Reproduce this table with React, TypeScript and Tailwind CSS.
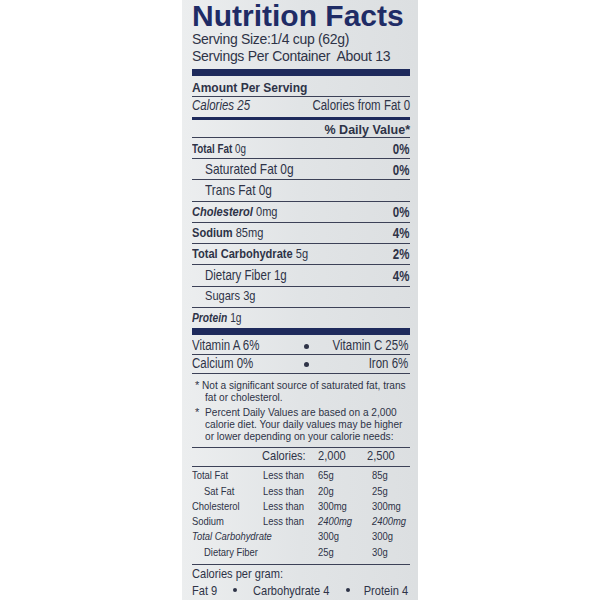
import React from "react";

const sans = "font-['Liberation_Sans',Arial,sans-serif]";

// the label uses a condensed face; squeeze Liberation Sans to match
function C({
  children,
  right,
  className = "",
  squeeze = "scale-x-[0.82]",
}: {
  children: React.ReactNode;
  right?: boolean;
  className?: string;
  squeeze?: string;
}) {
  return (
    <span
      className={`inline-block whitespace-nowrap ${squeeze} ${right ? "origin-right" : "origin-left"} ${className}`}
    >
      {children}
    </span>
  );
}

interface Nutrient {
  label: string;
  amount: string;
  pct?: string;
  bold?: boolean;
  italic?: boolean;
  indent?: boolean;
  size: string;
  h: string;
  pb: string;
}

const nutrients: Nutrient[] = [
  { label: "Total Fat", amount: "0g", pct: "0%", bold: true, size: "text-[12px]", h: "h-[21px]", pb: "pb-[2px]" },
  { label: "Saturated Fat", amount: "0g", pct: "0%", indent: true, size: "text-[14.5px]", h: "h-[21px]", pb: "pb-[2px]" },
  { label: "Trans Fat", amount: "0g", indent: true, size: "text-[14.5px]", h: "h-[22px]", pb: "pb-[3px]" },
  { label: "Cholesterol", amount: "0mg", pct: "0%", bold: true, italic: true, size: "text-[13.5px]", h: "h-[21px]", pb: "pb-[3px]" },
  { label: "Sodium", amount: "85mg", pct: "4%", bold: true, size: "text-[13.5px]", h: "h-[21px]", pb: "pb-[3px]" },
  { label: "Total Carbohydrate", amount: "5g", pct: "2%", bold: true, size: "text-[13.5px]", h: "h-[21px]", pb: "pb-[3px]" },
  { label: "Dietary Fiber", amount: "1g", pct: "4%", indent: true, size: "text-[14px]", h: "h-[22px]", pb: "pb-[3px]" },
  { label: "Sugars", amount: "3g", indent: true, size: "text-[13.5px]", h: "h-[21px]", pb: "pb-[4px]" },
];

const dvRows = [
  { label: "Total Fat", less: "Less than", a: "65g", b: "85g" },
  { label: "Sat Fat", less: "Less than", a: "20g", b: "25g", indent: true },
  { label: "Cholesterol", less: "Less than", a: "300mg", b: "300mg" },
  { label: "Sodium", less: "Less than", a: "2400mg", b: "2400mg", italicNums: true },
  { label: "Total Carbohydrate", less: "", a: "300g", b: "300g", italic: true },
  { label: "Dietary Fiber", less: "", a: "25g", b: "30g", indent: true },
];

function Dot({ size = "w-[5px] h-[5px]" }: { size?: string }) {
  return <span className={`${size} rounded-full bg-[#2e3347] inline-block shrink-0`} />;
}

export default function App() {
  return (
    <div className="w-[600px] h-[600px] bg-white flex justify-center overflow-hidden">
      <div className={`w-[236px] h-full bg-linear-to-r from-[#eceeef] via-[#e1e4e6] to-[#dcdfe1] pl-[10px] pr-[8px] flex flex-col text-[#2e3347] ${sans}`}>
        {/* Title */}
        <div className="h-[31px] pt-[1px] text-[30px] leading-[30px] font-black text-[#1f2c66] whitespace-nowrap">
          Nutrition Facts
        </div>
        <div className="text-[14px] leading-[17px] tracking-[-0.3px] whitespace-nowrap">
          <div>Serving Size:1/4 cup (62g)</div>
          <div>Servings Per Container&nbsp; About 13</div>
        </div>

        <div className="mt-[4px] h-[7px] bg-[#1e2a5c]" />

        {/* Amount per serving */}
        <div className="h-[21px] border-b border-[#3c4157] flex items-end pb-[2px] font-bold text-[12px] leading-none">
          Amount Per Serving
        </div>
        <div className="h-[20px] flex items-end justify-between pb-[5px] text-[14px] leading-none">
          <C className="italic">Calories 25</C>
          <C right>Calories from Fat 0</C>
        </div>
        <div className="h-[3px] bg-[#1e2a5c]" />

        <div className="h-[18px] border-b border-[#3c4157] flex items-end justify-end pb-[1px] font-bold text-[12.5px] leading-none">
          % Daily Value*
        </div>

        {nutrients.map((n) => (
          <div
            key={n.label}
            className={`${n.h} ${n.pb} border-b border-[#3c4157] flex items-end justify-between leading-none`}
          >
            <div className={n.indent ? "pl-[13px]" : ""}>
              <C className={n.size}>
                <span className={`${n.bold ? "font-bold" : ""} ${n.italic ? "italic" : ""}`}>{n.label}</span> {n.amount}
              </C>
            </div>
            {n.pct && (
              <C right className="text-[14px] font-bold pr-[1px]">
                {n.pct}
              </C>
            )}
          </div>
        ))}

        <div className="h-[20px] flex items-end pb-[4px] leading-none">
          <C className="text-[12.5px]">
            <span className="font-bold italic">Protein</span> 1g
          </C>
        </div>
        <div className="h-[7px] bg-[#1e2a5c]" />

        {/* Vitamins */}
        <div className="h-[20px] border-b border-[#3c4157] grid grid-cols-[110px_8px_1fr] items-end pb-[2px] text-[14px] leading-none">
          <C>Vitamin A 6%</C>
          <span className="flex justify-center pb-[3px]"><Dot /></span>
          <span className="text-right pr-[2px]"><C right>Vitamin C 25%</C></span>
        </div>
        <div className="h-[19px] border-b border-[#3c4157] grid grid-cols-[110px_8px_1fr] items-end pb-[3px] text-[14px] leading-none">
          <C>Calcium 0%</C>
          <span className="flex justify-center pb-[3px]"><Dot /></span>
          <span className="text-right pr-[2px]"><C right>Iron 6%</C></span>
        </div>

        {/* Footnotes */}
        <div className="border-b border-[#3c4157] pt-[5px] pb-[5px] text-[11px] leading-[12.3px]">
          <div className="flex">
            <span className="w-[10px] pl-[3px] shrink-0">*</span>
            <div>
              <div><C squeeze="scale-x-[0.92]">Not a significant source of saturated fat, trans</C></div>
              <div className="pl-[3px]"><C squeeze="scale-x-[0.92]">fat or cholesterol.</C></div>
            </div>
          </div>
          <div className="flex mt-[2px]">
            <span className="w-[13px] pl-[3px] shrink-0">*</span>
            <div>
              <div><C squeeze="scale-x-[0.92]">Percent Daily Values are based on a 2,000</C></div>
              <div><C squeeze="scale-x-[0.92]">calorie diet. Your daily values may be higher</C></div>
              <div><C squeeze="scale-x-[0.92]">or lower depending on your calorie needs:</C></div>
            </div>
          </div>
        </div>

        {/* DV table */}
        <div className="h-[19px] border-b border-[#3c4157] grid grid-cols-[70px_56px_49px_1fr] items-end pb-[4px] text-[13.5px] leading-none">
          <span />
          <C>Calories:</C>
          <C>2,000</C>
          <C>2,500</C>
        </div>
        <div className="border-b border-[#3c4157] pt-[1px] pb-[4px] text-[11.5px] leading-[15.2px]">
          {dvRows.map((r) => (
            <div key={r.label} className="grid grid-cols-[71px_55px_54px_1fr]">
              <div className={r.indent ? "pl-[12px]" : ""}>
                <C className={r.italic ? "italic" : ""}>{r.label}</C>
              </div>
              <C>{r.less}</C>
              <C className={r.italicNums ? "italic" : ""}>{r.a}</C>
              <C className={r.italicNums ? "italic" : ""}>{r.b}</C>
            </div>
          ))}
        </div>

        <div className="text-[13.5px] leading-[17px]">
          <div><C>Calories per gram:</C></div>
          <div className="flex items-center">
            <span className="w-[41px]"><C>Fat 9</C></span>
            <Dot size="w-[4px] h-[4px]" />
            <span className="ml-[16px] w-[93px]"><C>Carbohydrate 4</C></span>
            <Dot size="w-[4px] h-[4px]" />
            <span className="flex-1 text-right pr-[2px]"><C right>Protein 4</C></span>
          </div>
        </div>
      </div>
    </div>
  );
}
